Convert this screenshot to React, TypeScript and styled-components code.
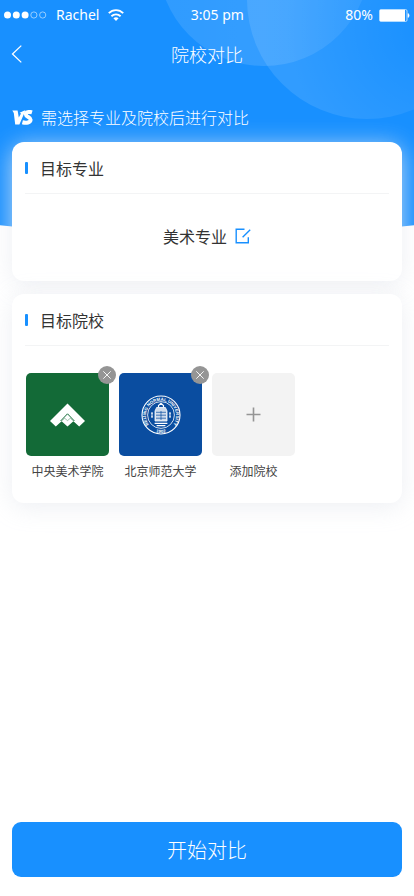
import React from "react";
import styled, { createGlobalStyle } from "styled-components";

const GlobalStyle = createGlobalStyle`
  *, *::before, *::after { box-sizing: border-box; }
  body {
    margin: 0;
    background: #fff;
    font-family: "Noto Sans CJK SC", "Noto Sans", sans-serif;
    color: #333;
  }
  button { font-family: inherit; border: 0; padding: 0; cursor: pointer; }
  h1, h2, p, ul { margin: 0; padding: 0; font-weight: 400; }
`;

const Page = styled.div`
  position: relative;
  min-height: 100vh;
  display: flex;
  flex-direction: column;
  overflow: hidden;
  isolation: isolate;
`;

const Backdrop = styled.div`
  position: absolute;
  z-index: -1;
  top: 0;
  left: 0;
  right: 0;
  height: 237px;
  overflow: hidden;
  background: #1890ff;
  clip-path: ellipse(160% 100% at 50% 0);
`;

const Bubble = styled.span<{ $size: number; $top: number; $right: number; $fill: string }>`
  position: absolute;
  width: ${(p) => p.$size}px;
  height: ${(p) => p.$size}px;
  top: ${(p) => p.$top}px;
  right: ${(p) => p.$right}px;
  border-radius: 50%;
  background: ${(p) => p.$fill};
`;

const StatusBar = styled.div`
  display: grid;
  grid-template-columns: 9fr auto 8fr;
  align-items: center;
  height: 30px;
  padding: 0 4px;
  color: #fff;
  font: 14px/28px "Noto Sans", sans-serif;
`;

const StatusGroup = styled.div<{ $end?: boolean }>`
  display: flex;
  align-items: center;
  gap: ${(p) => (p.$end ? 6 : 9)}px;
  justify-content: ${(p) => (p.$end ? "flex-end" : "flex-start")};
`;

const NavBar = styled.header`
  display: grid;
  grid-template-columns: 40px 1fr 40px;
  align-items: center;
  height: 48px;
  color: #fff;
`;

const BackButton = styled.button`
  display: flex;
  align-items: center;
  height: 40px;
  padding-left: 11px;
  background: none;
  color: inherit;
`;

const Title = styled.h1`
  font-size: 18px;
  font-weight: 300;
  line-height: 28px;
  text-align: center;
`;

const Hint = styled.p`
  display: flex;
  align-items: center;
  gap: 8px;
  height: 24px;
  margin: 27px 12px 13px;
  color: #fff;
  font-size: 16px;
  font-weight: 300;
  line-height: 24px;
`;

const Main = styled.main`
  flex: 1;
  display: flex;
  flex-direction: column;
  gap: 13px;
  padding: 0 12px 24px;
`;

const Card = styled.section`
  padding: 0 13px;
  border-radius: 12px;
  background: #fff;
  box-shadow: 0 4px 24px rgba(232, 235, 240, 0.8);
`;

const CardTitle = styled.h2`
  display: flex;
  align-items: center;
  gap: 12px;
  height: 52px;
  border-bottom: 1px solid #f3f4f5;
  font-size: 16px;
  line-height: 24px;

  &::before {
    content: "";
    width: 3px;
    height: 12px;
    border-radius: 1px;
    background: #1890ff;
  }
`;

const Major = styled.div`
  display: flex;
  align-items: center;
  justify-content: center;
  gap: 8px;
  height: 87px;
  padding-bottom: 4px;
  font-size: 16px;
  line-height: 24px;
`;

const EditButton = styled.button`
  display: flex;
  background: none;
  color: #1890ff;
`;

const Schools = styled.ul`
  display: flex;
  flex-wrap: wrap;
  gap: 10px;
  padding: 27px 1px 23px;
  list-style: none;
`;

const School = styled.li`
  position: relative;
  width: 83px;
  color: #444;
  font-size: 12px;
  line-height: 18px;
  text-align: center;
`;

const Tile = styled.div<{ $fill: string }>`
  display: flex;
  align-items: center;
  justify-content: center;
  height: 83px;
  margin-bottom: 6px;
  border-radius: 5px;
  background: ${(p) => p.$fill};
`;

const AddButton = styled.button`
  display: block;
  width: 100%;
  background: none;
  color: inherit;
  font-size: inherit;
  line-height: inherit;
`;

const RemoveButton = styled.button`
  position: absolute;
  top: -7px;
  right: -7px;
  display: flex;
  align-items: center;
  justify-content: center;
  width: 18px;
  height: 18px;
  border-radius: 50%;
  background: #959595;
`;

const Footer = styled.footer`
  padding: 0 12px 19px;
`;

const StartButton = styled.button`
  display: block;
  width: 100%;
  height: 55px;
  border-radius: 9px;
  background: #1890ff;
  color: #fff;
  font-size: 20px;
  font-weight: 300;
  line-height: 30px;
`;

const SignalDots = () => (
  <svg width="43" height="8" viewBox="0 0 43 8" aria-hidden="true">
    {[3.5, 12.3, 21.1].map((x) => (
      <circle key={x} cx={x} cy="4" r="3.5" fill="#fff" />
    ))}
    {[29.9, 38.7].map((x) => (
      <circle key={x} cx={x} cy="4" r="3.1" fill="none" stroke="#b5dcff" strokeWidth="0.8" />
    ))}
  </svg>
);

const WifiIcon = () => (
  <svg width="16" height="12" viewBox="0 0 16 12" fill="none" stroke="#fff" strokeWidth="1.9" aria-hidden="true">
    <path d="M0.8 4.2C4.8 0.1 11.2 0.1 15.2 4.2" />
    <path d="M3.4 7.2C6 4.7 10 4.7 12.6 7.2" />
    <path d="M5.4 9.2C7 7.8 9 7.8 10.6 9.2L8 11.9Z" fill="#fff" stroke="none" />
  </svg>
);

const BatteryIcon = () => (
  <svg width="31" height="13" viewBox="0 0 31 13" aria-hidden="true">
    <rect x="0.5" y="0.5" width="27.5" height="12" rx="1.5" fill="none" stroke="#b5dcff" />
    <rect x="1" y="1" width="25" height="11" fill="#fff" />
    <path d="M29 4.5C30.5 5 30.5 8 29 8.5Z" fill="#fff" stroke="#fff" strokeWidth="0.6" />
  </svg>
);

const BackIcon = () => (
  <svg width="12" height="18" viewBox="0 0 12 18" fill="none" stroke="#fff" strokeWidth="1.3" aria-hidden="true">
    <path d="M10.3 0.6L1.5 9L10.3 17.4" />
  </svg>
);

const VsIcon = () => (
  <svg width="21" height="15" viewBox="0 0 21 15" role="img" aria-label="VS">
    <path d="M0.3 0.4H5.6L6.8 7.6L9 3.6L7.6 2.8L12.4 0.4H13.4L7.4 14.6H3.2L1.8 3Z" fill="#fff" />
    <path
      d="M20 2.3C17.2 1.4 13.6 2.2 13.8 4.4C14 7 18.8 7.2 18.6 9.8C18.4 12.6 14.4 13.4 10.4 12.3"
      fill="none"
      stroke="#fff"
      strokeWidth="4"
    />
  </svg>
);

const EditIcon = () => (
  <svg width="16" height="16" viewBox="0 0 16 16" fill="none" stroke="#1890ff" strokeWidth="1.4" aria-hidden="true">
    <path d="M9.5 1.2H1.2V14.8H13.3V9.2M7.6 9.2L15.2 1.8" />
  </svg>
);

const ArtAcademyLogo = () => (
  <svg width="35" height="24" viewBox="0 0 35 24" aria-hidden="true">
    <path d="M17.5 0.5L35 18L29.2 23.5L23.4 18.2L17.5 23.5L11.6 18.2L5.8 23.5L0 18Z" fill="#fff" />
    <path d="M10.6 18L17.5 10.8L24.4 18" fill="none" stroke="#136a37" strokeWidth="1" />
    <path d="M12 17.8L14.6 15.2L17.5 17.6L20.4 15.2L23 17.8" fill="none" stroke="#136a37" strokeWidth="0.4" />
  </svg>
);

const NormalUniversityLogo = () => (
  <svg width="40" height="40" viewBox="0 0 40 40" fill="none" stroke="#fff" aria-hidden="true">
    <circle cx="20" cy="20" r="19" strokeWidth="1.1" />
    <circle cx="20" cy="20" r="13.4" strokeWidth="0.8" />
    <path id="seal-top" d="M7.6 29.2A15 15 0 1 1 32.4 29.2" stroke="none" />
    <path id="seal-base" d="M11 35.4A17.8 17.8 0 0 0 29 35.4" stroke="none" />
    <g fill="#fff" stroke="none" fontFamily="Liberation Sans, sans-serif" fontWeight="700" fontSize="4.4">
      <text>
        <textPath href="#seal-top" startOffset="50%" textAnchor="middle">BEIJING NORMAL UNIVERSITY</textPath>
      </text>
      <text>
        <textPath href="#seal-base" startOffset="50%" textAnchor="middle">1902</textPath>
      </text>
    </g>
    <path d="M17.5 12.2V10.5L20 8.2L22.5 10.5V12.2" strokeWidth="1.2" />
    <path d="M15.6 12.5H24.4L26 16V26H14V16Z" fill="#fff" fillOpacity="0.8" strokeWidth="0.8" />
    <path d="M15 17.3H25M15 20.2H25M15 23.2H25M20 16V25" stroke="#0a4da0" strokeWidth="0.7" />
    <path d="M13.6 28.3H26.4M15.6 30.6H24.4" strokeWidth="1.2" />
    <path d="M10 18H12M11 18V22M10 22H12M28 18H30M29 18V22M28 22H30" strokeWidth="1" />
  </svg>
);

const PlusIcon = () => (
  <svg width="15" height="15" viewBox="0 0 15 15" stroke="#959595" strokeWidth="1.6" aria-hidden="true">
    <path d="M7.5 0.5V14.5M0.5 7.5H14.5" />
  </svg>
);

const CloseIcon = () => (
  <svg width="8" height="8" viewBox="0 0 8 8" stroke="#fff" strokeWidth="0.9" aria-hidden="true">
    <path d="M0.3 0.3L7.7 7.7M7.7 0.3L0.3 7.7" />
  </svg>
);

const schools = [
  { name: "中央美术学院", fill: "#136a37", logo: <ArtAcademyLogo /> },
  { name: "北京师范大学", fill: "#0a4da0", logo: <NormalUniversityLogo /> },
];

export default function App() {
  return (
    <Page>
      <GlobalStyle />
      <Backdrop>
        <Bubble
          $size={212}
          $top={-146}
          $right={44}
          $fill="linear-gradient(90deg, rgba(255,255,255,.1), rgba(255,255,255,.12) 50%, rgba(255,255,255,.06))"
        />
        <Bubble
          $size={240}
          $top={-121}
          $right={-73}
          $fill="radial-gradient(circle at 78% 62%, rgba(255,255,255,0), rgba(255,255,255,.11) 62%)"
        />
      </Backdrop>

      <StatusBar>
        <StatusGroup>
          <SignalDots />
          <span>Rachel</span>
          <WifiIcon />
        </StatusGroup>
        <span>3:05 pm</span>
        <StatusGroup $end>
          <span>80%</span>
          <BatteryIcon />
        </StatusGroup>
      </StatusBar>

      <NavBar>
        <BackButton type="button" aria-label="返回">
          <BackIcon />
        </BackButton>
        <Title>院校对比</Title>
      </NavBar>

      <Hint>
        <VsIcon />
        需选择专业及院校后进行对比
      </Hint>

      <Main>
        <Card>
          <CardTitle>目标专业</CardTitle>
          <Major>
            <span>美术专业</span>
            <EditButton type="button" aria-label="修改专业">
              <EditIcon />
            </EditButton>
          </Major>
        </Card>

        <Card>
          <CardTitle>目标院校</CardTitle>
          <Schools>
            {schools.map((school) => (
              <School key={school.name}>
                <Tile $fill={school.fill}>{school.logo}</Tile>
                {school.name}
                <RemoveButton type="button" aria-label={`移除${school.name}`}>
                  <CloseIcon />
                </RemoveButton>
              </School>
            ))}
            <School>
              <AddButton type="button">
                <Tile as="span" $fill="#f3f3f3">
                  <PlusIcon />
                </Tile>
                添加院校
              </AddButton>
            </School>
          </Schools>
        </Card>
      </Main>

      <Footer>
        <StartButton type="button">开始对比</StartButton>
      </Footer>
    </Page>
  );
}
